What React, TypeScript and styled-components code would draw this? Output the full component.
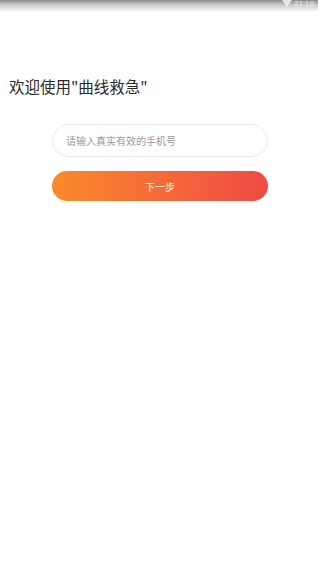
import styled, { createGlobalStyle } from "styled-components";

const GlobalStyle = createGlobalStyle`
  html, body {
    margin: 0;
    padding: 0;
    background: #ffffff;
  }
  body {
    font-family: "Noto Sans CJK SC", "Noto Sans", sans-serif;
  }
  * { box-sizing: border-box; }
`;

const Page = styled.div`
  width: 318px;
  height: 566px;
  background: #fff;
  display: flex;
  flex-direction: column;
`;

const StatusBar = styled.div`
  height: 12px;
  background: linear-gradient(to bottom, #8a8a8a 0%, #c9c9c9 40%, #ffffff 100%);
  display: flex;
  justify-content: flex-end;
  align-items: flex-start;
  padding-right: 4px;
  gap: 2px;
`;

const StatusText = styled.span`
  font-family: "Liberation Sans", sans-serif;
  font-size: 8px;
  line-height: 8px;
  color: #f4f4f4;
  opacity: 0.8;
`;

const Title = styled.h1`
  margin: 63px 0 0 9px;
  font-size: 15.5px;
  line-height: 22px;
  font-weight: 400;
  color: #2b2b2b;
`;

const Form = styled.div`
  margin: 27px 0 0 52px;
  width: 216px;
  display: flex;
  flex-direction: column;
  gap: 14px;
`;

const PhoneInput = styled.input`
  height: 33px;
  border: 1px solid #e8e8e8;
  border-radius: 17px;
  padding: 0 13px;
  font-family: "Noto Sans CJK SC", sans-serif;
  font-size: 10px;
  color: #333;
  outline: none;
  background: #fff;
  &::placeholder {
    color: #9a9a9a;
  }
`;

const NextButton = styled.button`
  height: 30px;
  border: 0;
  border-radius: 15px;
  background: linear-gradient(to right, #fb8a2b, #ef4a46);
  color: #fff;
  font-family: "Noto Sans CJK SC", sans-serif;
  font-size: 10px;
  padding: 0;
`;

function App() {
  return (
    <Page>
      <GlobalStyle />
      <StatusBar>
        <svg width="10" height="8" viewBox="0 0 10 8">
          <path d="M0 0 L10 0 L5 7 Z" fill="#f2f2f2" opacity="0.85" />
        </svg>
        <StatusText>21:18</StatusText>
      </StatusBar>
      <Title>欢迎使用"曲线救急"</Title>
      <Form>
        <PhoneInput placeholder="请输入真实有效的手机号" />
        <NextButton>下一步</NextButton>
      </Form>
    </Page>
  );
}

export default App;
